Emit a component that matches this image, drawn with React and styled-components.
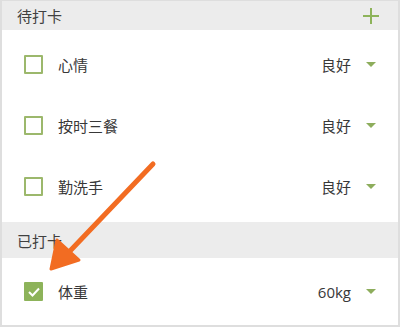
import React from "react";
import styled, { createGlobalStyle } from "styled-components";

const Global = createGlobalStyle`
  html, body {
    margin: 0;
    padding: 0;
    background: #fff;
  }
  body {
    font-family: "Open Sans", "Noto Sans CJK SC", sans-serif;
  }
`;

const Frame = styled.div`
  position: relative;
  box-sizing: border-box;
  width: 400px;
  height: 327px;
  border: 2px solid #dedede;
  border-top-width: 1px;
  overflow: hidden;
  background: #fff;
`;

const SectionHeader = styled.div`
  display: flex;
  align-items: center;
  justify-content: space-between;
  height: ${(p) => p.$h}px;
  padding: 0 19px 0 15px;
  background: #ececec;
  color: #404040;
  font-size: 15px;
`;

const List = styled.div`
  padding: ${(p) => p.$pt}px 0 ${(p) => p.$pb}px;
`;

const Row = styled.div`
  display: flex;
  align-items: center;
  height: 61px;
  padding: 0 22px;
`;

const Box = styled.span`
  box-sizing: border-box;
  width: 19px;
  height: 19px;
  border: 2px solid #9cb86c;
  border-radius: 1px;
  display: flex;
  align-items: center;
  justify-content: center;
  background: ${(p) => (p.$checked ? "#8db35a" : "#fff")};
  border-color: ${(p) => (p.$checked ? "#8db35a" : "#9cb86c")};
`;

const Label = styled.span`
  margin-left: 15px;
  flex: 1;
  color: #383838;
  font-size: 15px;
`;

const Value = styled.span`
  color: #383838;
  font-size: 15px;
`;

const Caret = styled.span`
  margin-left: 15px;
  width: 0;
  height: 0;
  border-left: 5px solid transparent;
  border-right: 5px solid transparent;
  border-top: 5px solid #8dad5c;
`;

const Overlay = styled.svg`
  position: absolute;
  left: 0;
  top: 0;
  pointer-events: none;
`;

const Plus = () => (
  <svg width="16" height="16" viewBox="0 0 16 16">
    <path d="M8 0v16M0 8h16" stroke="#8db35a" strokeWidth="2" />
  </svg>
);

const Check = () => (
  <svg width="12" height="10" viewBox="0 0 12 10">
    <path d="M1 5l3.5 3.5L11 1.5" fill="none" stroke="#fff" strokeWidth="2" />
  </svg>
);

const Item = ({ label, value, checked }) => (
  <Row>
    <Box $checked={checked}>{checked && <Check />}</Box>
    <Label>{label}</Label>
    <Value>{value}</Value>
    <Caret />
  </Row>
);

export default function App() {
  return (
    <>
      <Global />
      <Frame>
        <SectionHeader $h={29}>
          <span>待打卡</span>
          <Plus />
        </SectionHeader>
        <List $pt={4} $pb={5}>
          <Item label="心情" value="良好" />
          <Item label="按时三餐" value="良好" />
          <Item label="勤洗手" value="良好" />
        </List>
        <SectionHeader $h={36}>
          <span>已打卡</span>
        </SectionHeader>
        <List $pt={3} $pb={0}>
          <Item label="体重" value="60kg" checked />
        </List>
        <Overlay width="400" height="327" viewBox="0 0 400 327">
          <path d="M151 163L68 250" stroke="#f26c22" strokeWidth="5" strokeLinecap="round" />
          <path d="M49 268L55 239L77 259Z" fill="#f26c22" stroke="#f26c22" strokeWidth="3" strokeLinejoin="round" />
        </Overlay>
      </Frame>
    </>
  );
}
